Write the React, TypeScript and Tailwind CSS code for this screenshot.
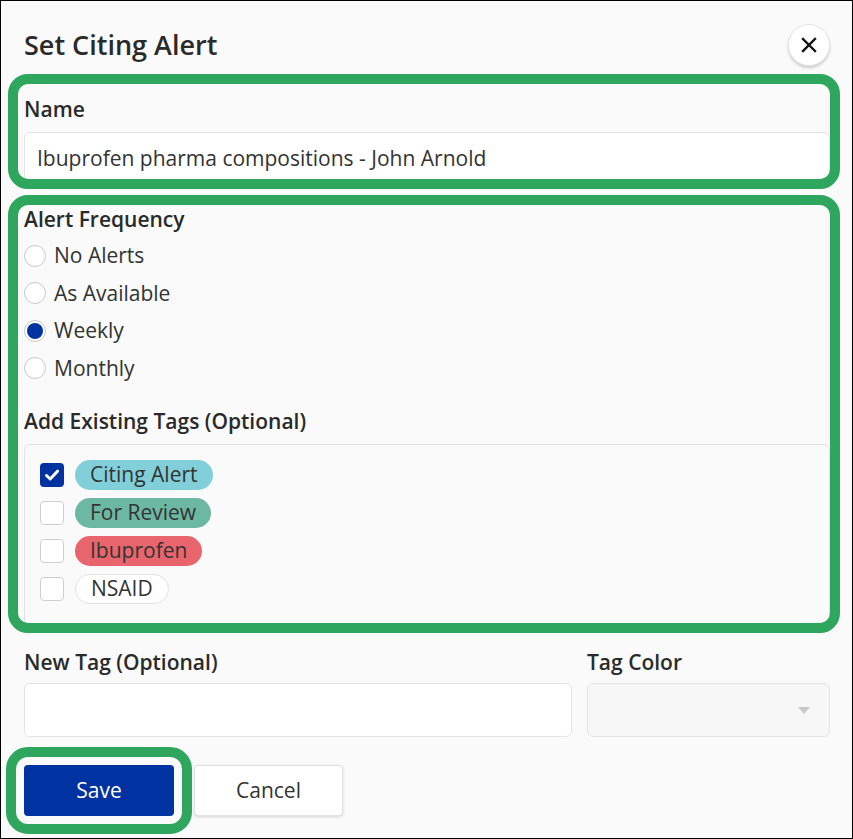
import React, {useState} from 'react';

type Tag = {
    name: string,
    color: string,
};

const frequencies = ["No Alerts", "As Available", "Weekly", "Monthly"];

const tags: Tag[] = [
    {name: "Citing Alert", color: "bg-[#80cfd9]"},
    {name: "For Review", color: "bg-[#6cb8a3]"},
    {name: "Ibuprofen", color: "bg-[#e9656d]"},
    {name: "NSAID", color: "bg-white border border-[#e2e2e2]"},
];

function Radio({checked}: {checked: boolean}) {
    return (
        <span className="w-[22px] h-[22px] rounded-full border border-[#c9c9c9] bg-white flex items-center justify-center shrink-0">
            {checked && <span className="w-[16px] h-[16px] rounded-full bg-[#0033a1]"/>}
        </span>
    );
}

function Checkbox({checked}: {checked: boolean}) {
    if (checked) {
        return (
            <span className="w-6 h-6 rounded-[4px] bg-[#0033a1] flex items-center justify-center shrink-0">
                <svg width="16" height="16" viewBox="0 0 16 16" fill="none">
                    <path d="M2.5 8.5 L6.2 12 L13.5 4.2" stroke="white" strokeWidth="3" strokeLinecap="round" strokeLinejoin="round"/>
                </svg>
            </span>
        );
    }
    return <span className="w-6 h-6 rounded-[4px] border border-[#cfcfcf] bg-white shrink-0"/>;
}

export default function App() {
    const [frequency, setFrequency] = useState<string>("Weekly");
    const [selected, setSelected] = useState<string[]>(["Citing Alert"]);

    return (
        <div
            className="relative w-[853px] h-[839px] border border-black bg-[#fafafa] overflow-hidden pl-[23px] pr-[22px] text-[#333]"
            style={{fontFamily: '"Open Sans", "Noto Sans", sans-serif'}}
        >
            <div className="flex items-center justify-between pt-[23px]">
                <h1 className="text-[27px] leading-8 font-semibold text-[#2a2a2a]">Set Citing Alert</h1>
                <button className="w-[42px] h-[42px] rounded-full bg-white border border-[#e6e6e6] shadow-[0_2px_3px_rgba(0,0,0,0.18)] flex items-center justify-center">
                    <svg width="16" height="16" viewBox="0 0 16 16">
                        <path d="M2 2 L14 14 M14 2 L2 14" stroke="#111" strokeWidth="2.4" strokeLinecap="square"/>
                    </svg>
                </button>
            </div>

            <div className="mt-[29px]">
                <p className="text-[21px] leading-7 font-semibold text-[#2a2a2a]">Name</p>
                <div className="mt-[9px] h-[54px] bg-white border border-[#e4e4e4] rounded-[6px] flex items-center px-3 text-[21px] text-[#333]">
                    Ibuprofen pharma compositions - John Arnold
                </div>
            </div>

            <div className="mt-[19px]">
                <p className="text-[21px] leading-7 font-semibold text-[#2a2a2a]">Alert Frequency</p>
                <div className="mt-[4px]">
                    {frequencies.map(f => (
                        <label key={f} className="flex items-center gap-2 h-[37.5px] text-[21px] cursor-pointer" onClick={() => setFrequency(f)}>
                            <Radio checked={frequency === f}/>
                            <span>{f}</span>
                        </label>
                    ))}
                </div>
            </div>

            <div className="mt-[20px]">
                <p className="text-[21px] leading-7 font-semibold text-[#2a2a2a]">Add Existing Tags (Optional)</p>
                <div className="mt-[9px] border border-[#e2e2e2] rounded-[6px] pl-[15px] pt-[11px] pb-[16px]">
                    {tags.map(t => (
                        <div
                            key={t.name}
                            className="flex items-center gap-[11px] h-[38px] cursor-pointer"
                            onClick={() => setSelected(selected.includes(t.name) ? selected.filter(d => d !== t.name) : [...selected, t.name])}
                        >
                            <Checkbox checked={selected.includes(t.name)}/>
                            <span className={`h-[30px] px-[15px] rounded-full flex items-center text-[21px] text-[#333] ${t.color}`}>
                                {t.name}
                            </span>
                        </div>
                    ))}
                </div>
            </div>

            <div className="flex gap-[15px] mt-[23px]">
                <div className="w-[548px]">
                    <p className="text-[21px] leading-7 font-semibold text-[#2a2a2a]">New Tag (Optional)</p>
                    <div className="mt-[7px] h-[54px] bg-white border border-[#e4e4e4] rounded-[6px]"/>
                </div>
                <div className="flex-1">
                    <p className="text-[21px] leading-7 font-semibold text-[#2a2a2a]">Tag Color</p>
                    <div className="mt-[7px] h-[54px] bg-[#f7f7f7] border border-[#e4e4e4] rounded-[6px] flex items-center justify-end pr-[19px]">
                        <svg width="12" height="7" viewBox="0 0 12 7">
                            <path d="M0 0 L12 0 L6 7 Z" fill="#c8c8c8"/>
                        </svg>
                    </div>
                </div>
            </div>

            <div className="flex gap-[20px] mt-[28px]">
                <button className="w-[150px] h-[51px] rounded-[4px] bg-[#0033a1] text-white text-[21px]">Save</button>
                <button className="w-[149px] h-[51px] rounded-[4px] bg-white border border-[#e2e2e2] shadow-[0_1px_3px_rgba(0,0,0,0.15)] text-[21px] text-[#333]">Cancel</button>
            </div>

            <div className="absolute left-[7px] top-[73px] w-[832px] h-[115px] rounded-[20px] border-[10px] border-[#2ea65d] pointer-events-none"/>
            <div className="absolute left-[7px] top-[194px] w-[832px] h-[438px] rounded-[20px] border-[10px] border-[#2ea65d] pointer-events-none"/>
            <div className="absolute left-[5px] top-[746px] w-[186px] h-[87px] rounded-[22px] border-[10px] border-[#2ea65d] pointer-events-none"/>
        </div>
    );
}
